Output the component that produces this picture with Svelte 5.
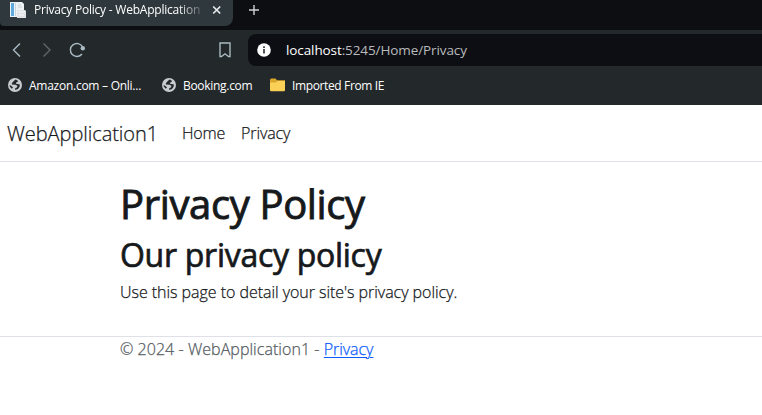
<script>
  const bookmarks = [
    { label: 'Amazon.com – Onli...', kind: 'globe', gap: 21, width: 112, spacing: -0.26 },
    { label: 'Booking.com', kind: 'globe', gap: 17, width: 70, spacing: -0.3 },
    { label: 'Imported From IE', kind: 'folder', gap: 0, width: 93, spacing: -0.37 }
  ];
</script>

<div class="window">
  <div class="tabs">
    <div class="tab">
      <svg class="doc" width="18" height="18" viewBox="0 0 18 18">
        <path d="M1 1h12l2 2v13H1z" fill="#edf2f5" />
        <path d="M2 2h3v13H2z" fill="#5fa9dd" />
        <path d="M6 2h1v13H6z" fill="#c8d5dc" />
        <path d="M9 4h3M9 6h4" stroke="#c6d0d5" />
        <path d="M8 9h8l1 1v7H8z" fill="#dfe1e2" />
        <path d="M9 11h7M10 14h5" stroke="#f8f8f8" />
      </svg>
      <span class="title">Privacy Policy - WebApplication</span>
      <svg class="close" width="10" height="10" viewBox="0 0 10 10"><path d="M1.200 1.500l7 7M8.200 1.500l-7 7" stroke="#e8ebec" stroke-width="1.700" /></svg>
    </div>
    <svg class="plus" width="12" height="12" viewBox="0 0 12 12"><path d="M6 1v10M1 6h10" stroke="#d0d3d4" stroke-width="1.400" /></svg>
  </div>

  <div class="toolbar">
    <svg class="back" width="10" height="16" viewBox="0 0 10 16"><path d="M8 1.500L1.500 8 8 14.500" /></svg>
    <svg class="forward" width="10" height="16" viewBox="0 0 10 16"><path d="M1.500 1.500L8 8l-6.500 6.500" /></svg>
    <svg class="reload" width="18" height="16" viewBox="0 0 18 16">
      <path d="M13 12A6.500 6.500 0 1 1 13.500 4.700" />
      <circle cx="13.800" cy="6.200" r="2.200" fill="#a9bac1" stroke="none" />
    </svg>
    <svg class="save" width="12" height="16" viewBox="0 0 12 16"><path d="M1 1h10v13.500H9.500L6 11.800l-3.500 2.700H1z" /></svg>
    <div class="address">
      <svg width="14" height="14" viewBox="0 0 14 14"><circle cx="7" cy="7" r="6.800" fill="#fff" /><path d="M7 3.200v1.700M7 6v4.500" stroke="#33383b" stroke-width="1.700" /></svg>
      <span class="url"><b>localhost</b>:5245/Home/Privacy</span>
    </div>
  </div>

  <div class="bookmarks">
    {#each bookmarks as mark}
      <div class="mark" style:margin-right="{mark.gap}px">
        {#if mark.kind === 'globe'}
          <svg width="14" height="14" viewBox="0 0 14 14">
            <circle cx="7" cy="7" r="7" fill="#c8ccce" />
            <path d="M7.500 1.500L5.800 3 4 5 3.800 6.500l4 .3L9.500 8 8.800 9.500l-1.600.8v1.700l2.800-.9 1.600-2.300.3-2.200L9.500 6 8 5.800V4.800l2-1.200-.7-1.300zM1.600 7l.3 1.800 1.900 2L5 9.500 3.500 8z" fill="#23282b" />
          </svg>
        {:else}
          <svg width="15" height="14" viewBox="0 0 15 14"><path d="M0 2q0-1.500 1.500-1.500h4L7 2.200h8V5H0z" fill="#dba72b" /><path d="M0 4.500h6l1.300-1.500H15v9q0 1.200-1.200 1.200H1.200Q0 13.200 0 12z" fill="#fad056" /></svg>
        {/if}
        <span style:width="{mark.width}px" style:letter-spacing="{mark.spacing}px">{mark.label}</span>
      </div>
    {/each}
  </div>

  <header>
    <span class="brand">WebApplication1</span>
    <span class="home">Home</span>
    <span class="privacy">Privacy</span>
  </header>
  <main>
    <h1>Privacy Policy</h1>
    <h2>Our privacy policy</h2>
    <p>Use this page to detail your site's privacy policy.</p>
  </main>
  <footer><span>© 2024 - WebApplication1 -{' '}</span><a href="#privacy">Privacy</a></footer>
</div>

<style>
  :global(body) { margin: 0; background: #fff; overflow: hidden; }
  .window { width: 762px; height: 415px; background: #fff; font-family: "Open Sans", "Noto Sans", sans-serif; overflow: hidden; }
  svg { display: block; flex: none; }
  span { white-space: pre; flex: none; }
  .tabs { height: 30px; background: #0d0e12; display: flex; }
  .tab { width: 233px; height: 26px; background: #2f383c; border-radius: 0 0 8px 4px; display: flex; box-sizing: border-box; padding-left: 9px; }
  .doc { margin-top: 1px; }
  .title { margin-left: 7px; width: 167px; font-size: 12px; line-height: 20px; letter-spacing: -0.22px; color: #fff; mask-image: linear-gradient(90deg, #000 86%, rgba(0,0,0,.2)); }
  .close { margin: 5px 0 0 11px; }
  .plus { margin: 4px 0 0 15px; }
  .toolbar { height: 40px; background: #23282b; display: flex; align-items: center; }
  .toolbar > svg { fill: none; stroke: #a9bac1; stroke-width: 1.4; }
  .back { margin-left: 12px; }
  .toolbar > .forward { margin-left: 20px; stroke: #5e686c; }
  .reload { margin-left: 17px; }
  .save { margin-left: 132px; }
  .address { margin-left: 17px; flex: 1; height: 32px; background: #0d0e13; border-radius: 8px 0 0 8px; display: flex; align-items: center; padding-left: 9px; }
  .url { margin-left: 15px; font-size: 13.5px; letter-spacing: -0.1px; color: #b9bbbd; }
  .url b { font-weight: 400; color: #fff; }
  .bookmarks { height: 35px; background: #23282b; display: flex; padding-left: 8px; box-sizing: border-box; }
  .mark { display: flex; height: 30px; align-items: center; }
  .mark span { margin-left: 7px; font-size: 12px; color: #fff; }
  header { height: 57px; box-sizing: border-box; border-bottom: 1px solid #dee2e6; padding-left: 7px; display: flex; align-items: center; color: #16191c; font-weight: 300; font-size: 16px; -webkit-text-stroke: 0.25px currentColor; }
  .brand { width: 175px; font-size: 20px; letter-spacing: -0.05px; }
  .home { width: 59px; letter-spacing: -0.2px; }
  .privacy { letter-spacing: -0.1px; }
  main { height: 174px; padding-left: 120px; color: #16191c; }
  h1, h2, p { margin: 0; white-space: nowrap; }
  h1 { padding-top: 18px; font-size: 40px; line-height: 48px; font-weight: 400; letter-spacing: -0.36px; -webkit-text-stroke: 0.9px currentColor; }
  h2 { padding-top: 8px; font-size: 32px; line-height: 38px; font-weight: 400; letter-spacing: -0.28px; -webkit-text-stroke: 0.7px currentColor; }
  p { padding-top: 6px; font-size: 16px; line-height: 24px; font-weight: 300; letter-spacing: -0.04px; -webkit-text-stroke: 0.25px currentColor; }
  footer { border-top: 1px solid #dee2e6; padding-left: 120px; font-size: 16px; line-height: 25px; font-weight: 300; letter-spacing: 0.05px; color: #565c62; -webkit-text-stroke: 0.25px currentColor; }
  a { color: #0d5dfd; letter-spacing: -0.05px; text-underline-offset: 2px; text-decoration-thickness: 1px; }
</style>
